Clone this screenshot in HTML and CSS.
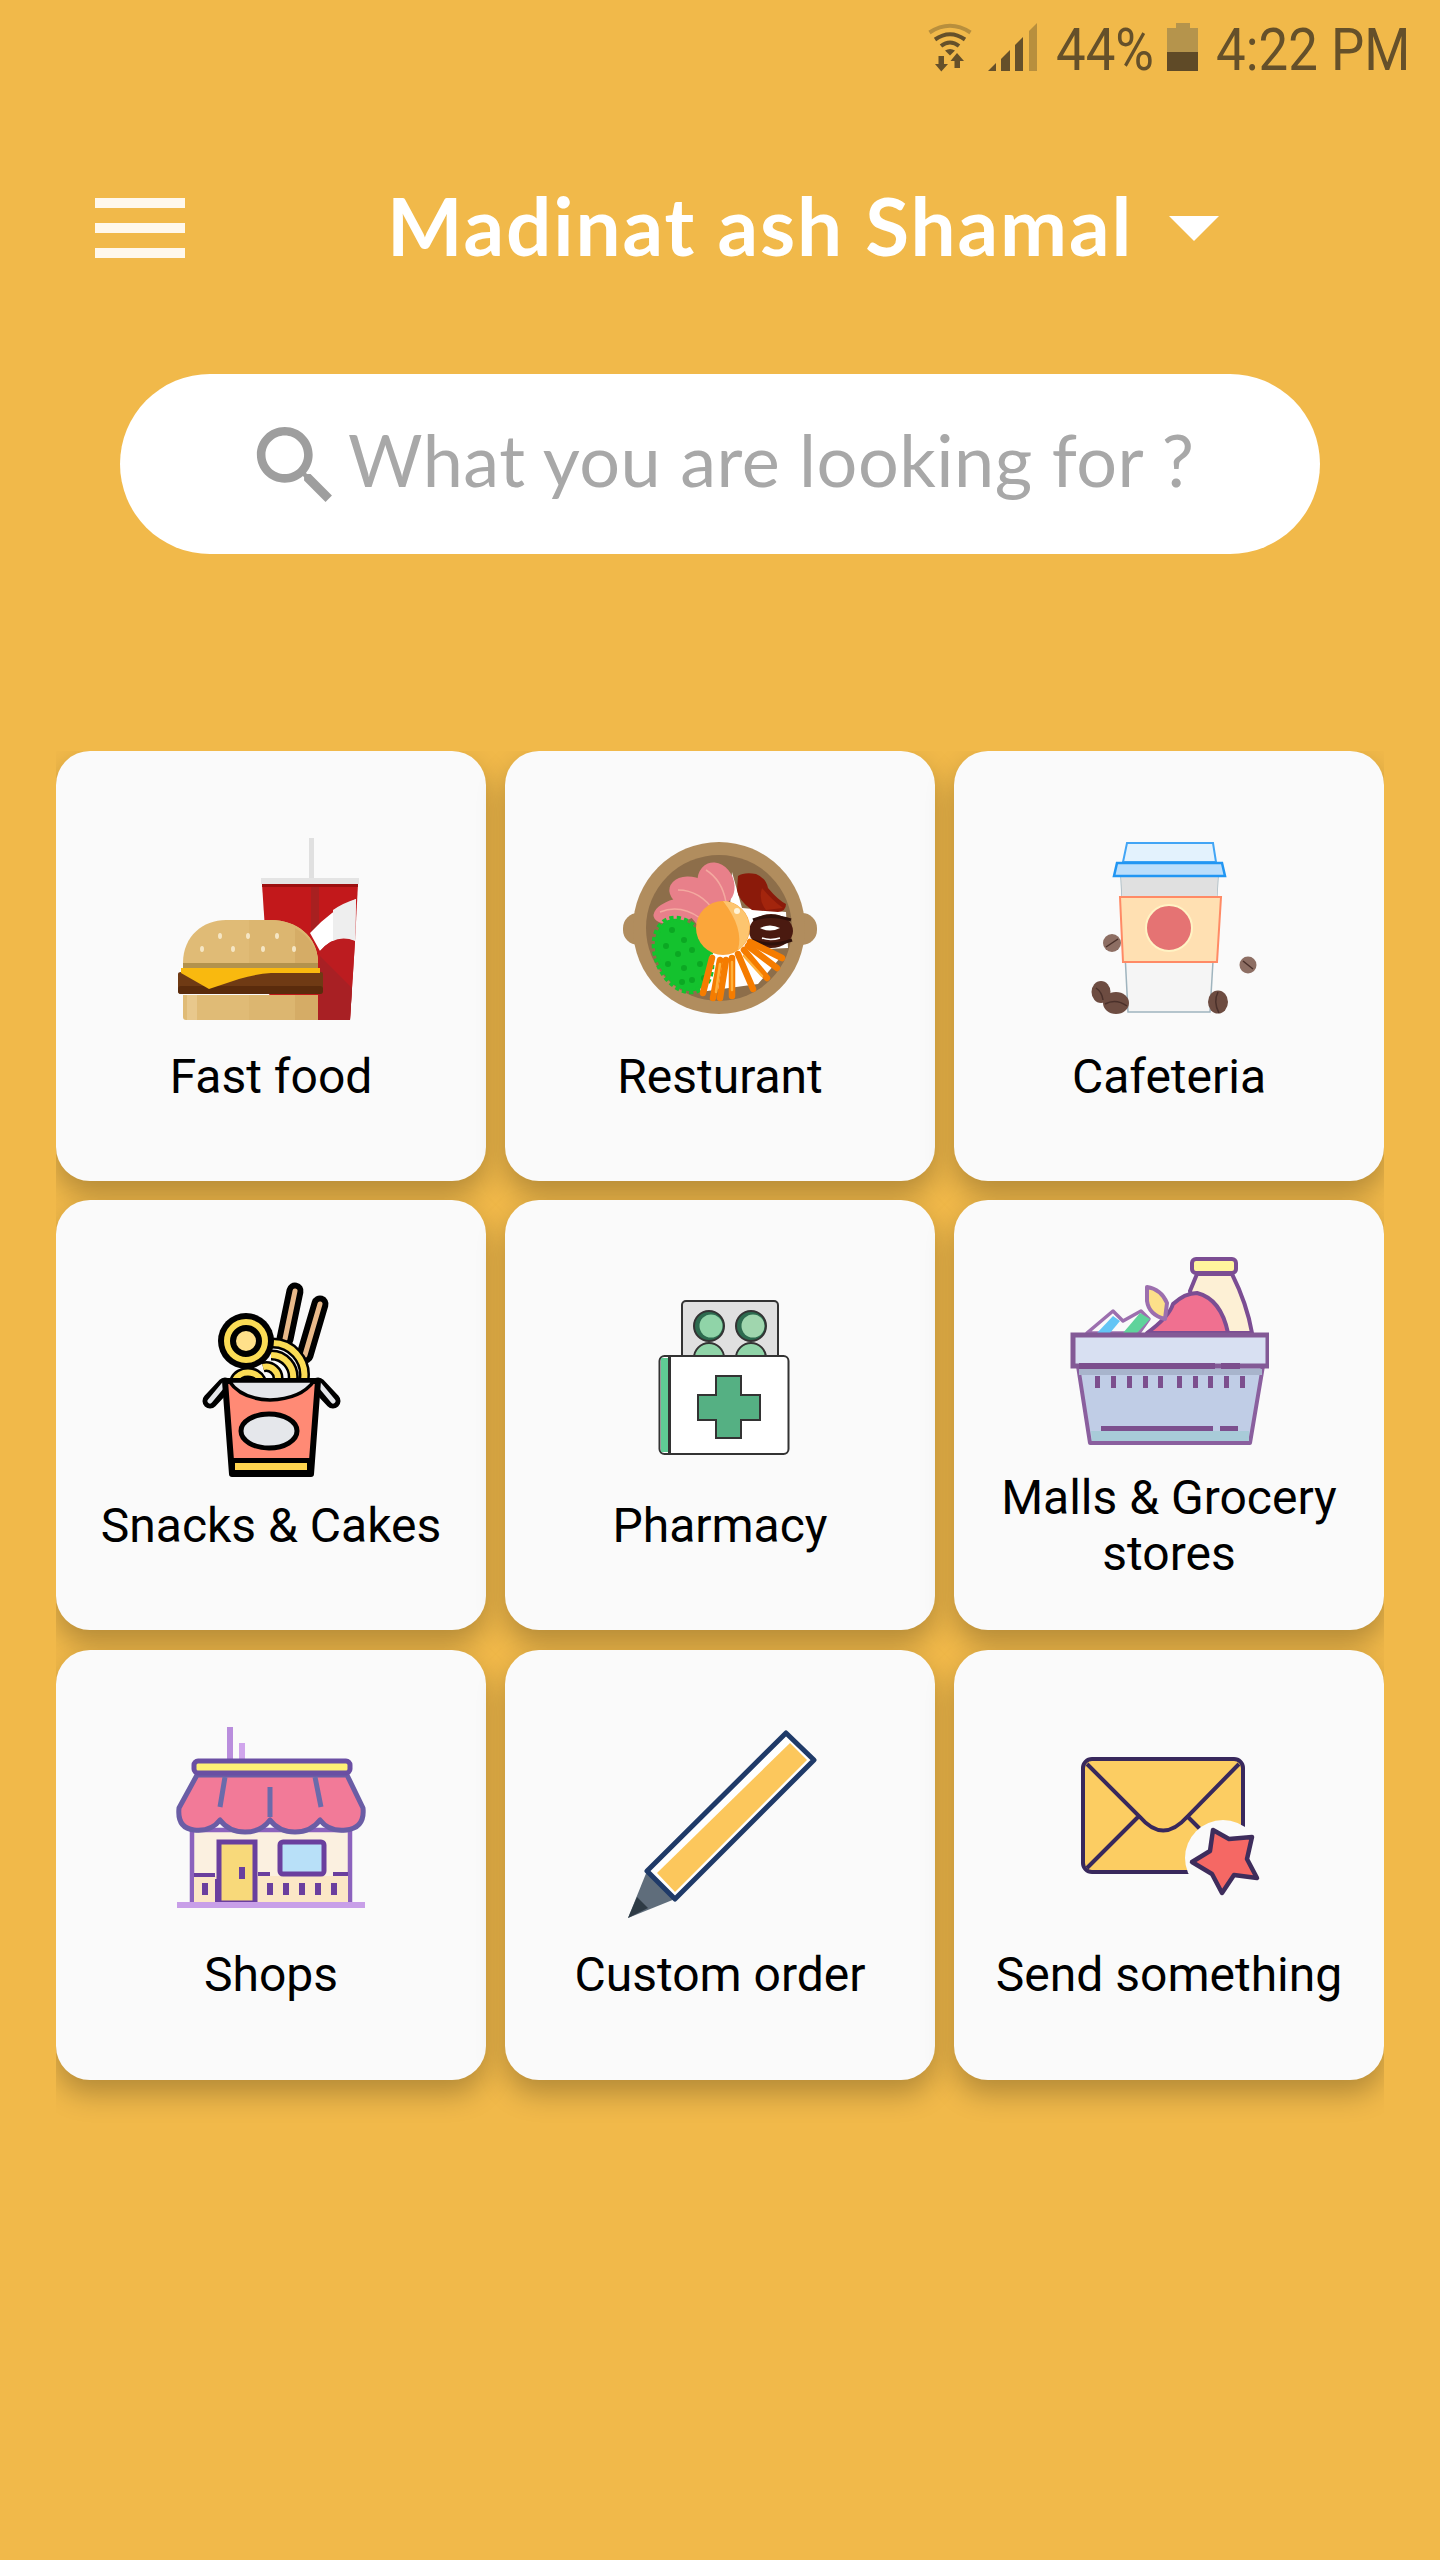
FILE: index.html
```html
<!DOCTYPE html>
<html lang="en">
<head>
    <meta charset="UTF-8"/>
    <meta name="viewport" content="width=device-width, initial-scale=1.0"/>
    <title>Madinat ash Shamal</title>
    <link rel="stylesheet" href="styles.css">
</head>
<body>
    <div class="status-bar">
        <svg class="status-wifi" width="44" height="50" viewBox="0 0 44 50">
            <path d="M1.5 10.5Q22 -3 42.5 10.5" fill="none" stroke="#65502a" stroke-width="4" opacity=".4"/>
            <path d="M7 17.5Q22 7 37 17.5" fill="none" stroke="#65502a" stroke-width="4"/>
            <path d="M13 24Q22 17 31 24" fill="none" stroke="#65502a" stroke-width="4"/>
            <path d="M17 28.5Q22 25.5 27 28.5L22 33.5Z" fill="#65502a"/>
            <path d="M10.5 34H16V42H20L13.3 49.5 7 42H10.5Z" fill="#65502a"/>
            <path d="M29 31L36 39H32V46H26.5V39H22.5Z" fill="#65502a"/>
        </svg>
        <svg class="status-signal" width="49" height="48" viewBox="0 0 49 48">
            <path d="M0 48L8 40V48Z" fill="#65502a"/>
            <path d="M13 36L22 27V48H13Z" fill="#65502a"/>
            <path d="M27 22L35 14V48H27Z" fill="#65502a"/>
            <path d="M41 8L49 0V48H41Z" fill="#65502a" opacity=".4"/>
        </svg>
        <span class="status-percent">44%</span>
        <div class="status-battery">
            <div class="battery-cap"></div>
            <div class="battery-body"><div class="battery-level"></div></div>
        </div>
        <span class="status-time">4:22 PM</span>
    </div>

    <div class="header">
        <div class="menu-btn">
            <span></span>
            <span></span>
            <span></span>
        </div>
        <h1 class="city">Madinat ash Shamal</h1>
        <div class="city-arrow"></div>
    </div>

    <div class="search">
        <svg class="search-icon" width="103" height="103" viewBox="0 0 24 24">
            <path fill="#9e9e9e" d="M15.5 14h-.79l-.28-.27C15.41 12.59 16 11.11 16 9.5 16 5.91 13.09 3 9.5 3S3 5.91 3 9.5 5.91 16 9.5 16c1.61 0 3.09-.59 4.23-1.57l.27.28v.79l5 4.99L20.49 19l-4.99-5zm-6 0C7.01 14 5 11.99 5 9.5S7.01 5 9.5 5 14 7.01 14 9.5 11.99 14 9.5 14z"/>
        </svg>
        <span class="search-text">What you are looking for ?</span>
    </div>

    <div class="grid">
        <div class="card">
            <svg class="card-icon" viewBox="0 0 200 200">
                <rect x="138" y="10" width="5" height="41" fill="#e0e0e0"/>
                <rect x="90" y="50" width="98" height="6" fill="#e4e4e4"/>
                <path d="M91 56H187L184 113 179 192H100Z" fill="#c2181b"/>
                <rect x="140" y="56" width="8" height="50" fill="#a82020"/>
                <rect x="91" y="56" width="96" height="3" fill="#9c0f0f"/>
                <path d="M139 105Q160 82 185 71L184 113Q165 105 149 123Z" fill="#ffffff"/>
                <path d="M162 82Q172 75 185 71L184 113Q172 109 162 114Z" fill="#eeeeee"/>
                <path d="M149 123Q165 105 184 113L179 192H147Z" fill="#bc1c20"/>
                <path d="M149 128L181 160 179 192H147Z" fill="#a82024"/>
                <path d="M12 135C12 108 32 92 55 92H100C125 92 147 108 147 135Z" fill="#e0bb76"/>
                <path d="M78 92H100C125 92 147 108 147 135H78Z" fill="#dcb670"/>
                <path d="M124 100C138 108 147 120 147 135H124Z" fill="#d5ac66"/>
                <g fill="#f5e6c4">
                    <ellipse cx="49" cy="108" rx="2" ry="3"/>
                    <ellipse cx="77" cy="108" rx="2" ry="3"/>
                    <ellipse cx="106" cy="108" rx="2" ry="3"/>
                    <ellipse cx="31" cy="121" rx="2" ry="3"/>
                    <ellipse cx="62" cy="121" rx="2" ry="3"/>
                    <ellipse cx="92" cy="121" rx="2" ry="3"/>
                    <ellipse cx="123" cy="121" rx="2" ry="3"/>
                </g>
                <rect x="12" y="135" width="135" height="6" fill="#b3924d"/>
                <path d="M7 146Q7 144 10 144H150Q152 144 152 146V163Q152 166 149 166H10Q7 166 7 163Z" fill="#6f3a14"/>
                <rect x="7" y="158" width="145" height="8" rx="3" fill="#5a2b0c"/>
                <path d="M10 140H149V145H100Q85 146 68 151L38 161 10 145Z" fill="#f9b90f"/>
                <path d="M12 167H147V189Q147 192 144 192H15Q12 192 12 189Z" fill="#e0bb76"/>
                <rect x="78" y="167" width="69" height="25" fill="#dcb670"/>
                <rect x="124" y="167" width="23" height="25" fill="#d5ac66"/>
                <rect x="16" y="167" width="10" height="25" fill="#e8c88c"/>
            </svg>
            <div class="card-label">Fast food</div>
        </div>

        <div class="card">
            <svg class="card-icon" viewBox="0 0 200 200">
                <rect x="3" y="85" width="194" height="32" rx="15" fill="#b18d5e"/>
                <circle cx="99" cy="100" r="86" fill="#b18d5e"/>
                <circle cx="99" cy="100" r="73" fill="#8d6e4a"/>
                <path d="M84 130L80 164 138 156 160 130 120 110Z" fill="#ffffff"/>
                <path d="M112 44L122 80 166 84 168 120 130 122 110 80Z" fill="#ffffff"/>
                <g fill="#e8808a">
                    <ellipse cx="57" cy="83" rx="24" ry="12" transform="rotate(-14 57 83)"/>
                    <ellipse cx="72" cy="65" rx="23" ry="16" transform="rotate(14 72 65)"/>
                    <ellipse cx="96" cy="56" rx="18" ry="22" transform="rotate(-22 96 56)"/>
                    <path d="M60 76L92 60 106 74 80 100Z"/>
                </g>
                <path d="M40 84Q60 76 80 90M58 62Q80 62 95 84M86 42Q102 52 106 74" fill="none" stroke="#f4a9a0" stroke-width="1.500"/>
                <path d="M118 48Q124 44 136 46 146 50 148 60 158 72 166 76 166 83 158 84L132 82Q118 72 117 62Z" fill="#8b1a0a"/>
                <path d="M142 60Q152 72 163 80L146 82Q138 72 142 60Z" fill="#a3250d"/>
                <ellipse cx="151" cy="103" rx="22" ry="17" fill="#4a1a10"/>
                <path d="M140 100Q150 95 160 100 150 105 140 100Z" fill="#ffffff"/>
                <path d="M142 110Q150 113 160 110" fill="none" stroke="#ffffff" stroke-width="1.500"/>
                <path d="M133 92Q150 85 171 92M132 112Q150 120 172 112" fill="none" stroke="#2e100a" stroke-width="3"/>
                <ellipse cx="63" cy="127" rx="26" ry="38" transform="rotate(-24 63 127)" fill="#14c22e" stroke="#14c22e" stroke-width="6" stroke-dasharray="4 3"/>
                <g fill="#0ba823">
                    <circle cx="52" cy="102" r="3"/>
                    <circle cx="64" cy="112" r="3"/>
                    <circle cx="46" cy="118" r="3"/>
                    <circle cx="58" cy="126" r="3"/>
                    <circle cx="72" cy="122" r="3"/>
                    <circle cx="48" cy="136" r="3"/>
                    <circle cx="64" cy="140" r="3"/>
                    <circle cx="80" cy="136" r="3"/>
                    <circle cx="72" cy="152" r="3"/>
                    <circle cx="84" cy="150" r="3"/>
                    <circle cx="62" cy="154" r="3"/>
                </g>
                <g stroke="#f57c00" stroke-width="6.500" stroke-linecap="round">
                    <path d="M92 130L83 165"/>
                    <path d="M100 132L93 170"/>
                    <path d="M106 132L100 170"/>
                    <path d="M112 130L112 168"/>
                    <path d="M118 126L133 161"/>
                    <path d="M124 122L147 150"/>
                    <path d="M128 118L157 140"/>
                    <path d="M130 114L162 130"/>
                </g>
                <g stroke="#ffb13b" stroke-width="2.500" stroke-linecap="round">
                    <path d="M100 136L96 164"/>
                    <path d="M112 134L112 162"/>
                    <path d="M124 128L142 148"/>
                </g>
                <circle cx="103" cy="100" r="27" fill="#fba63a"/>
                <path d="M103 73A27 27 0 0 1 118 122Q124 100 103 73Z" fill="#fdc56f"/>
                <circle cx="117" cy="83" r="3" fill="#fff3d6"/>
            </svg>
            <div class="card-label">Resturant</div>
        </div>

        <div class="card">
            <svg class="card-icon" viewBox="0 0 200 200">
                <path d="M52 48H149L141 184H59Z" fill="#f5f5f5" stroke="#9fb4be" stroke-width="1.5"/>
                <path d="M52 48H149L148 69H53Z" fill="#e0e0e0"/>
                <path d="M58 15H144L147 34H54Z" fill="#e3f2fd" stroke="#42a5f5" stroke-width="2"/>
                <path d="M48 35H153L156 48H45Z" fill="#bbdefb" stroke="#2196f3" stroke-width="2.500"/>
                <path d="M51 69H152L148 134H54Z" fill="#ffe0b2" stroke="#ff8a65" stroke-width="2"/>
                <circle cx="100" cy="100" r="23" fill="#e57373" stroke="#fff3c4" stroke-width="2"/>
                <g fill="#8d6e63">
                    <circle cx="43" cy="115" r="9"/>
                    <circle cx="179" cy="137" r="8.5"/>
                </g>
                <g fill="#6d4c41">
                    <ellipse cx="32" cy="164" rx="9.5" ry="11"/>
                    <ellipse cx="47" cy="175" rx="13" ry="11"/>
                    <ellipse cx="149" cy="174" rx="10" ry="11.500"/>
                </g>
                <path d="M37 119Q43 115 49 111M174 133Q179 137 184 141M27 160Q33 164 34 172M36 176Q47 170 58 178M149 164Q144 174 150 185" fill="none" stroke="#4a302a" stroke-width="1.500"/>
            </svg>
            <div class="card-label">Cafeteria</div>
        </div>

        <div class="card">
            <svg class="card-icon" viewBox="0 0 200 200">
                <path d="M124 14L114 62M149 27L134 78" stroke="#000000" stroke-width="17" stroke-linecap="round"/>
                <path d="M124 14L114 62M149 27L134 78" stroke="#e8b98a" stroke-width="5" stroke-linecap="round"/>
                <path d="M133 103A32 32 0 0 0 100 66M122 103A22 22 0 0 0 100 78M107 103A12 12 0 0 0 92 90M90 103A14 12 0 0 0 64 103" fill="none" stroke="#000000" stroke-width="11"/>
                <path d="M133 103A32 32 0 0 0 100 66M122 103A22 22 0 0 0 100 78M107 103A12 12 0 0 0 92 90M90 103A14 12 0 0 0 64 103" fill="none" stroke="#fbdc55" stroke-width="6"/>
                <circle cx="75" cy="64" r="28" fill="#000000"/>
                <circle cx="75" cy="64" r="19" fill="none" stroke="#fbdc55" stroke-width="6"/>
                <circle cx="75" cy="64" r="10" fill="#ffe08a"/>
                <path d="M54 108L39 124M147 108L162 124" stroke="#000000" stroke-width="15" stroke-linecap="round"/>
                <path d="M54 106L39 124M147 106L162 124" stroke="#e5e7eb" stroke-width="5" stroke-linecap="round"/>
                <path d="M54 104H147L140 197H61Z" fill="#ff8a75" stroke="#000000" stroke-width="6" stroke-linejoin="round"/>
                <path d="M58 104H143Q130 122 99 123 70 122 58 104Z" fill="#e5e7eb" stroke="#000000" stroke-width="3.500"/>
                <ellipse cx="98" cy="154" rx="28" ry="17" fill="#e5e7eb" stroke="#000000" stroke-width="5"/>
                <rect x="60" y="181" width="81" height="17" fill="#000000"/>
                <rect x="64" y="186" width="72" height="7" fill="#ffd54f"/>
            </svg>
            <div class="card-label">Snacks &amp; Cakes</div>
        </div>

        <div class="card">
            <svg class="card-icon" viewBox="0 0 200 200">
                <rect x="62" y="24" width="96" height="60" rx="4" fill="#e0e0e0" stroke="#333333" stroke-width="2"/>
                <g stroke="#333333" stroke-width="2">
                    <circle cx="89" cy="49" r="15" fill="#2d6b4f"/>
                    <circle cx="131" cy="49" r="15" fill="#2d6b4f"/>
                    <circle cx="89" cy="81" r="15" fill="#90d4a8"/>
                    <circle cx="131" cy="81" r="15" fill="#90d4a8"/>
                </g>
                <circle cx="91" cy="49" r="11.500" fill="#90d4a8"/>
                <circle cx="133" cy="49" r="11.500" fill="#a0d6ae"/>
                <rect x="39.500" y="79" width="129" height="98" rx="5" fill="#ffffff" stroke="#333333" stroke-width="2"/>
                <rect x="41" y="81" width="7" height="94" fill="#5fcb94"/>
                <rect x="48" y="80" width="3" height="96" fill="#333333"/>
                <path d="M96 99H121V118H140V143H121V161H96V143H78V118H96Z" fill="#55b083" stroke="#333333" stroke-width="2"/>
            </svg>
            <div class="card-label">Pharmacy</div>
        </div>

        <div class="card">
            <svg class="card-icon" viewBox="0 0 200 200">
                <path d="M128 25L121 42 130 84H183Q178 55 163 25Z" fill="#fdf0d5" stroke="#7b4d93" stroke-width="4" stroke-linejoin="round"/>
                <rect x="123" y="10" width="44" height="14" rx="4" fill="#fff59d" stroke="#7b4d93" stroke-width="4"/>
                <path d="M18 84L44 62 54 72 72 62 80 70 70 84Z" fill="#fafafa" stroke="#9c6fae" stroke-width="3.500" stroke-linejoin="round"/>
                <path d="M28 84L44 67 51 72 41 84Z" fill="#63c5f5"/>
                <path d="M54 84L71 64 81 70 68 84Z" fill="#5fd39b"/>
                <path d="M78 84Q100 68 104 55 116 44 128 44 152 50 159 84Z" fill="#f07090" stroke="#7b4d93" stroke-width="4" stroke-linejoin="round"/>
                <path d="M78 38Q92 40 98 54L96 70Q80 66 78 52Z" fill="#fce08a" stroke="#9c6fae" stroke-width="4" stroke-linejoin="round"/>
                <path d="M9 117H194L181 194H21Z" fill="#c0cde6" stroke="#8a5f9e" stroke-width="4" stroke-linejoin="round"/>
                <rect x="10" y="120" width="183" height="6" fill="#a8b4cc"/>
                <path d="M22 182H180L180 192H23Z" fill="#a8cbd8"/>
                <rect x="4" y="86" width="195" height="31" fill="#d8e0f2" stroke="#835a96" stroke-width="5"/>
                <g fill="#7c4f8e">
                    <rect x="10" y="114" width="136" height="6"/>
                    <rect x="152" y="114" width="19" height="6"/>
                    <rect x="32" y="177" width="112" height="5"/>
                    <rect x="151" y="177" width="18" height="5"/>
                    <rect x="26" y="127" width="5" height="12"/>
                    <rect x="42" y="127" width="5" height="12"/>
                    <rect x="58" y="127" width="5" height="12"/>
                    <rect x="74" y="127" width="5" height="12"/>
                    <rect x="89" y="127" width="5" height="12"/>
                    <rect x="108" y="127" width="5" height="12"/>
                    <rect x="124" y="127" width="5" height="12"/>
                    <rect x="139" y="127" width="5" height="12"/>
                    <rect x="155" y="127" width="5" height="12"/>
                    <rect x="171" y="127" width="5" height="12"/>
                </g>
            </svg>
            <div class="card-label">Malls &amp; Grocery stores</div>
        </div>

        <div class="card">
            <svg class="card-icon" viewBox="0 0 200 200">
                <rect x="56" y="1" width="6" height="32" fill="#b98ddd"/>
                <rect x="68" y="17" width="6" height="16" fill="#d0a5ec"/>
                <rect x="21" y="104" width="158" height="73" fill="#fbf0e0" stroke="#8b62bd" stroke-width="4.500"/>
                <rect x="23" y="150" width="154" height="26" fill="#fbe7c6"/>
                <path d="M23 149H44M87 148H99M162 148H177" stroke="#6a3f9e" stroke-width="4"/>
                <rect x="44" y="153" width="2" height="24" fill="#6a3f9e"/>
                <rect x="31" y="157" width="6" height="12" fill="#6a3f9e"/>
                <rect x="48" y="116" width="36" height="61" fill="#f8d97a" stroke="#6a3f9e" stroke-width="5"/>
                <rect x="68" y="141" width="6" height="12" fill="#6a3f9e"/>
                <rect x="109" y="116" width="44" height="32" rx="3" fill="#b8e0f8" stroke="#6a3f9e" stroke-width="5"/>
                <g fill="#6a3f9e">
                    <rect x="96" y="157" width="6" height="12"/>
                    <rect x="112" y="157" width="6" height="12"/>
                    <rect x="128" y="157" width="6" height="12"/>
                    <rect x="144" y="157" width="6" height="12"/>
                    <rect x="160" y="157" width="6" height="12"/>
                </g>
                <path d="M26 49H176L192 82Q194 102 175 104 158 106 149 94 140 106 124 106 108 106 99 94 90 106 74 106 58 106 49 94 40 106 23 104 6 102 8 82Z" fill="#f27a98" stroke="#6a5da5" stroke-width="5" stroke-linejoin="round"/>
                <path d="M54 51L49 81M99 61V91M144 51L150 81" stroke="#6a6bab" stroke-width="5"/>
                <rect x="23" y="35" width="156" height="12" rx="4" fill="#fff176" stroke="#6a4fa3" stroke-width="5"/>
                <rect x="6" y="176" width="188" height="6" fill="#c89fe8"/>
            </svg>
            <div class="card-label">Shops</div>
        </div>

        <div class="card">
            <svg class="card-icon" viewBox="0 0 200 200">
                <path d="M27 145L55 173 8 192Z" fill="#5f6d7b"/>
                <path d="M17 171L28 182 8 192Z" fill="#2e3b45"/>
                <path d="M166 7L194 34 55 173 27 145Z" fill="#ffffff" stroke="#1f3a68" stroke-width="5" stroke-linejoin="round"/>
                <path d="M170 17L187 34 55 166 37 147Z" fill="#fcc75c"/>
            </svg>
            <div class="card-label">Custom order</div>
        </div>

        <div class="card">
            <svg class="card-icon" viewBox="0 0 200 200">
                <rect x="14" y="33" width="160" height="113" rx="9" fill="#fccd62" stroke="#38285c" stroke-width="4"/>
                <path d="M18 38L71 91Q94 118 118 91L170 38M18 142L69 91M119 91L170 142" fill="none" stroke="#38285c" stroke-width="4"/>
                <circle cx="154" cy="132" r="38" fill="#fafafa"/>
                <path d="M144 104L160 113 183 111 178 133 188 152 165 149 153 167 143 148 123 136 141 125Z" fill="#f56864" stroke="#3e2d5c" stroke-width="4.500" stroke-linejoin="round"/>
            </svg>
            <div class="card-label">Send something</div>
        </div>
    </div>
</body>
</html>
```

FILE: styles.css
```css
body {
    margin: 0;
    background: #f1b94a;
    font-family: Roboto, sans-serif;
}

.status-bar {
    display: flex;
    align-items: flex-start;
    height: 72px;
    padding-top: 22px;
    padding-left: 928px;
    box-sizing: border-box;
    color: #65502a;
    font-family: Roboto, sans-serif;
    font-size: 60px;
    line-height: 50px;
}
.status-signal {
    margin-left: 16px;
    margin-top: 1px;
}
.status-percent {
    display: block;
    width: 94px;
    margin-top: 3px;
    margin-left: 19px;
    white-space: nowrap;
    transform: scaleX(0.88);
    transform-origin: left;
}
.status-battery {
    width: 31px;
    margin-left: 17px;
    margin-top: 1px;
}
.battery-cap {
    width: 14px;
    height: 5px;
    margin: 0 auto;
    background: #b5944c;
}
.battery-body {
    display: flex;
    flex-direction: column;
    justify-content: flex-end;
    height: 43px;
    background: #b5944c;
}
.battery-level {
    height: 19px;
    background: #5f4a27;
}
.status-time {
    display: block;
    width: 191px;
    margin-top: 3px;
    margin-left: 18px;
    white-space: nowrap;
    transform: scaleX(0.88);
    transform-origin: left;
}

.header {
    display: flex;
    align-items: center;
    height: 120px;
    margin-top: 96px;
    padding-left: 95px;
}
.menu-btn {
    display: flex;
    flex-direction: column;
    gap: 15px;
    width: 90px;
}
.menu-btn span {
    height: 10px;
    background: #fff8ec;
}
.city {
    margin: 0 0 6px 202px;
    color: #fff;
    font-family: Lato, sans-serif;
    font-size: 80px;
    font-weight: 700;
    letter-spacing: 1.9px;
    line-height: 110px;
    white-space: nowrap;
}
.city-arrow {
    width: 0;
    height: 0;
    margin-left: 36px;
    border-left: 25px solid transparent;
    border-right: 25px solid transparent;
    border-top: 25px solid #fff;
}

.search {
    display: flex;
    align-items: center;
    width: 1200px;
    height: 180px;
    margin: 86px 0 0 120px;
    padding-left: 124px;
    box-sizing: border-box;
    background: #fff;
    border-radius: 90px;
}
.search-icon {
    margin-top: 2px;
}
.search-text {
    margin-bottom: 10px;
    margin-left: 1px;
    color: #a8a8a8;
    font-family: Lato, sans-serif;
    font-size: 72px;
    letter-spacing: 0.5px;
    white-space: nowrap;
}

.grid {
    display: grid;
    grid-template-columns: repeat(3, 430px);
    grid-auto-rows: 430px;
    gap: 19.25px 19px;
    width: 1328px;
    margin: 197px 0 0 56px;
    padding-bottom: 50px;
    overflow: hidden;
}
.card {
    display: flex;
    flex-direction: column;
    align-items: center;
    justify-content: center;
    padding: 0 20px;
    box-sizing: border-box;
    background: #fafafa;
    border-radius: 34px;
    box-shadow: 0 14px 28px rgba(0, 0, 0, 0.25);
}
.card-icon {
    display: block;
    flex: none;
    width: 200px;
    height: 200px;
    margin-bottom: 21px;
}
.card-label {
    color: #000;
    font-size: 48px;
    line-height: 56px;
    text-align: center;
}
```
